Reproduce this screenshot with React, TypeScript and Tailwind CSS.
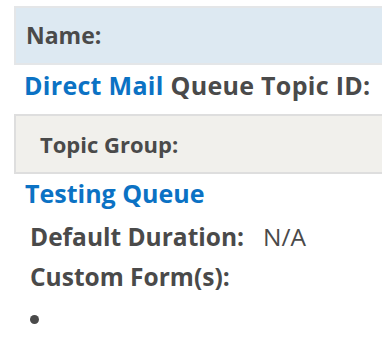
import React from 'react';

const font = { fontFamily: '"Open Sans", Lato, sans-serif' };

export default function App() {
    return (
        <div className="w-[382px] h-[342px] bg-white overflow-hidden text-[#4a4a4a]" style={font}>
            <div className="pt-[6px] pl-[14px]">
                <div className="h-[59px] flex items-center bg-[#dde9f2] border-y-2 border-l-2 border-[#e4e6e8] pl-[10px]">
                    <span className="text-[23px] font-bold">Name:</span>
                </div>
            </div>
            <div className="pl-[24px] mt-[5px] text-[25px] font-bold leading-[30px] tracking-[0.3px] whitespace-nowrap">
                <a className="text-[#0b72c4]">Direct Mail</a> <span>Queue Topic ID:</span>
            </div>
            <div className="pl-[14px] mt-[14px]">
                <div className="h-[60px] flex items-center bg-[#f1f0ec] border-y-2 border-l-2 border-[#dedede] pl-[24px]">
                    <span className="text-[22px] font-bold">Topic Group:</span>
                </div>
            </div>
            <div className="pl-[25px] mt-[4px] text-[25px] font-bold leading-[30px] text-[#0b72c4]">
                Testing Queue
            </div>
            <div className="pl-[30px] mt-[9px] flex flex-col text-[24.5px] leading-[40px]">
                <div className="flex gap-[19px]">
                    <span className="font-bold">Default Duration:</span>
                    <span>N/A</span>
                </div>
                <span className="font-bold">Custom Form(s):</span>
                <ul className="list-disc list-inside leading-[30px] mt-[7px]">
                    <li></li>
                </ul>
            </div>
        </div>
    );
}
